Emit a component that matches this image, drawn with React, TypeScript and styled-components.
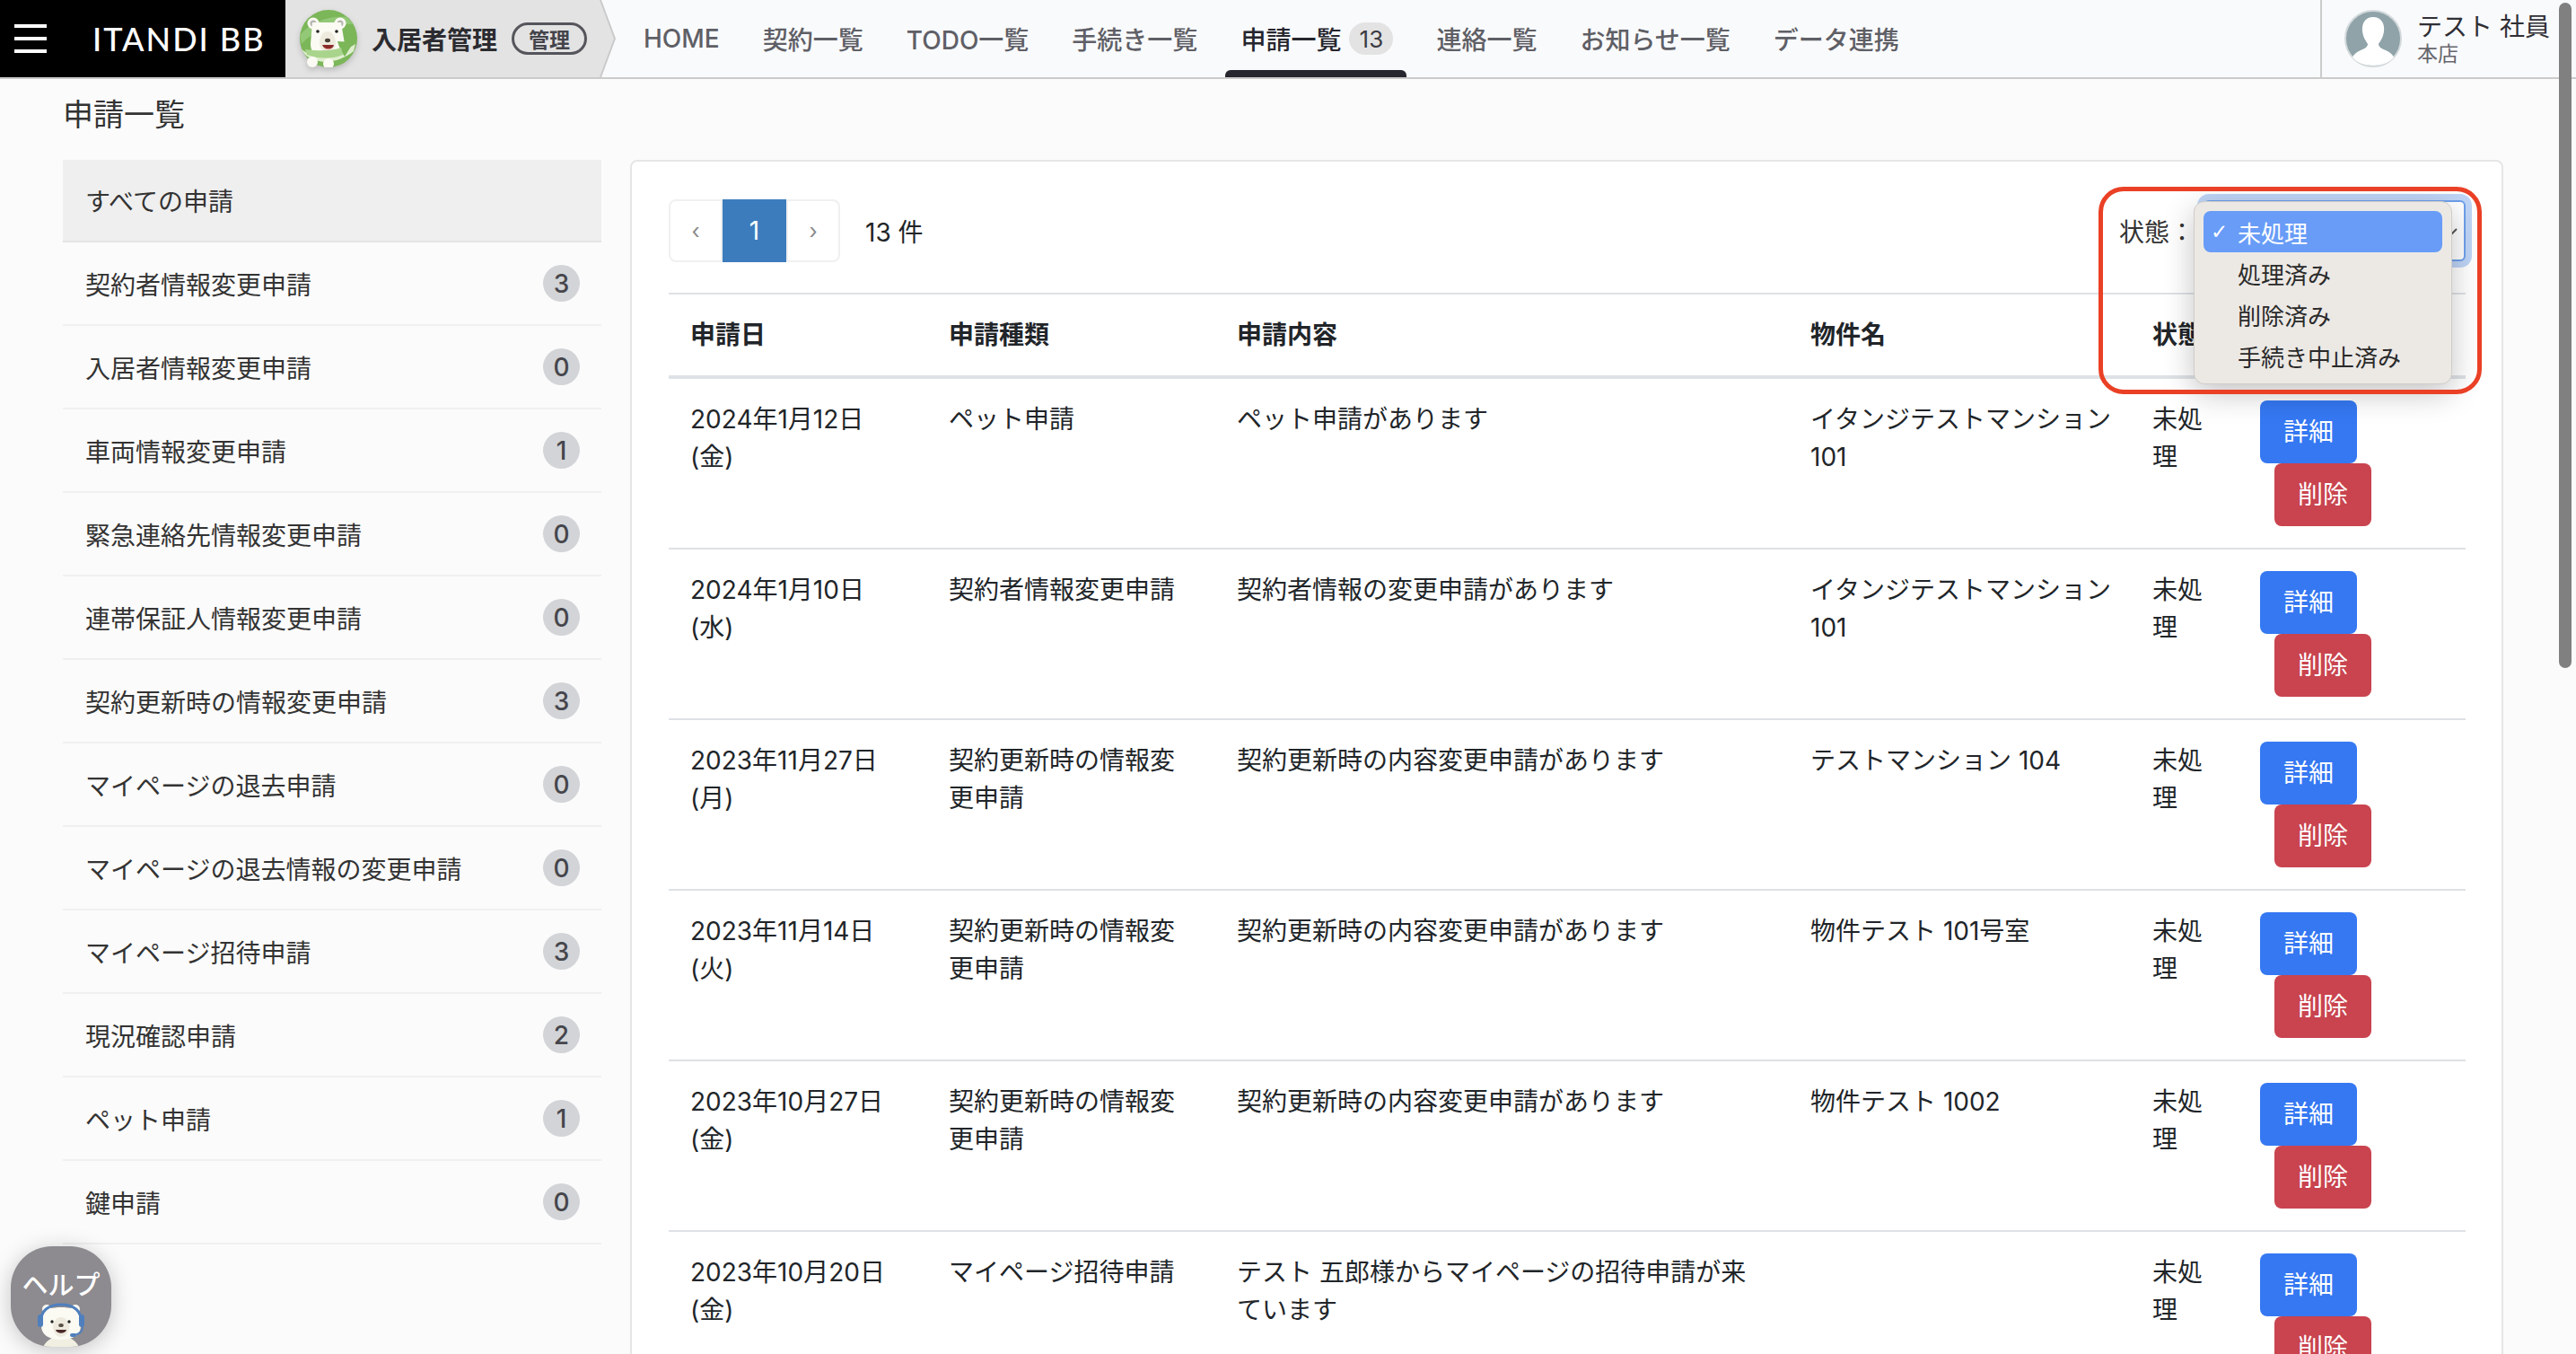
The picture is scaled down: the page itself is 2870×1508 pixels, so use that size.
import React from 'react'
import styled, { createGlobalStyle } from 'styled-components'

const GlobalStyle = createGlobalStyle`
  html, body {
    margin: 0;
    padding: 0;
    background: #fbfbfb;
    color: #212529;
    font-family: Inter, 'Noto Sans CJK JP', sans-serif;
    font-size: 28px;
  }
  * {
    box-sizing: border-box;
  }
`

const Page = styled.div`
  position: relative;
  width: 2870px;
  height: 1508px;
  overflow: hidden;
`

// header
const Header = styled.header`
  display: flex;
  height: 88px;
  background: #f9fafc;
  border-bottom: 2px solid #cbcbcb;
`

const Brand = styled.div`
  display: flex;
  align-items: center;
  width: 318px;
  padding-left: 16px;
  background: #000;
  color: #fff;
`

const Hamburger = styled.span`
  display: flex;
  flex-direction: column;
  justify-content: space-between;
  width: 36px;
  height: 32px;
  margin-right: 51px;
  i {
    display: block;
    height: 4px;
    background: #fff;
  }
`

const Logo = styled.span`
  font-family: Lato, sans-serif;
  font-size: 36px;
  font-weight: 500;
  letter-spacing: 2px;
  white-space: nowrap;
`

const Module = styled.div`
  position: relative;
  display: flex;
  align-items: center;
  width: 368px;
  padding-left: 16px;
  &::before,
  &::after {
    content: '';
    position: absolute;
    top: 0;
    bottom: 0;
    left: 0;
  }
  &::before {
    right: 0;
    background: #c9c9c9;
    clip-path: polygon(0 0, 352px 0, 368px 43px, 352px 86px, 0 86px);
  }
  &::after {
    right: 2px;
    background: #e3e3e3;
    clip-path: polygon(0 0, 350px 0, 366px 43px, 350px 86px, 0 86px);
  }
  > * {
    position: relative;
    z-index: 1;
  }
`

const BearMark = styled.svg`
  flex: none;
  width: 64px;
  height: 64px;
  margin-right: 16px;
  filter: drop-shadow(0 3px 3px rgba(0, 0, 0, 0.18));
`

const ModuleName = styled.span`
  font-weight: 700;
  color: #2b2b30;
  white-space: nowrap;
`

const RoleTag = styled.span`
  display: flex;
  align-items: center;
  justify-content: center;
  width: 84px;
  height: 36px;
  margin-left: 16px;
  border: 3px solid #55555c;
  border-radius: 18px;
  font-size: 23px;
  font-weight: 700;
  color: #44444b;
`

const Nav = styled.nav`
  display: flex;
  gap: 48px;
  margin-left: 31px;
`

const NavItem = styled.a<{ $active?: boolean }>`
  position: relative;
  display: flex;
  align-items: center;
  height: 86px;
  font-weight: 500;
  color: ${(p) => (p.$active ? '#26262e' : '#5f5f66')};
  white-space: nowrap;
  &::after {
    content: '';
    display: ${(p) => (p.$active ? 'block' : 'none')};
    position: absolute;
    left: -17px;
    right: -15px;
    bottom: 0;
    height: 8px;
    border-radius: 6px 6px 0 0;
    background: #26262e;
  }
`

const NavCount = styled.span`
  display: flex;
  align-items: center;
  justify-content: center;
  width: 49px;
  height: 36px;
  margin-left: 9px;
  border-radius: 18px;
  background: #e3e3e3;
  font-size: 26px;
  font-weight: 400;
  color: #3c3c44;
`

const User = styled.div`
  display: flex;
  align-items: center;
  width: 285px;
  margin-left: auto;
  padding-left: 25px;
  border-left: 2px solid #cbcbcb;
`

const Avatar = styled.svg`
  flex: none;
  width: 64px;
  height: 64px;
  margin-right: 17px;
`

const UserText = styled.div`
  display: flex;
  flex-direction: column;
`

const UserName = styled.span`
  font-size: 28px;
  line-height: 34px;
  color: #2f2f35;
  white-space: nowrap;
`

const UserShop = styled.span`
  font-size: 23px;
  line-height: 26px;
  color: #66666c;
`

const Scrollbar = styled.div`
  position: absolute;
  top: 3px;
  right: 5px;
  width: 14px;
  height: 741px;
  border-radius: 7px;
  background: #808080;
`

// body
const Main = styled.main`
  padding: 0 81px 0 70px;
`

const Title = styled.h1`
  display: flex;
  align-items: center;
  height: 90px;
  margin: 0;
  padding-bottom: 16px;
  font-size: 34px;
  font-weight: 400;
  color: #333;
`

const Columns = styled.div`
  display: flex;
  gap: 32px;
`

const Side = styled.aside`
  flex: none;
  width: 600px;
`

const SideRow = styled.div<{ $active?: boolean }>`
  display: flex;
  align-items: center;
  justify-content: space-between;
  height: ${(p) => (p.$active ? 92 : 93)}px;
  padding: 0 24px 0 25px;
  border-bottom: 2px solid ${(p) => (p.$active ? '#e4e4e4' : '#f0f0f0')};
  background: ${(p) => (p.$active ? '#efefef' : 'transparent')};
  color: #333;
`

const SideCount = styled.span`
  display: flex;
  align-items: center;
  justify-content: center;
  width: 41px;
  height: 41px;
  border-radius: 50%;
  background: #d2d4d7;
  font-size: 28px;
  font-weight: 500;
  color: #46464c;
`

const Panel = styled.section`
  flex: none;
  width: 2087px;
  height: 1400px;
  padding: 42px 40px 0 41px;
  border: 2px solid #e6e6e6;
  border-radius: 8px;
  background: #fff;
`

const Toolbar = styled.div`
  display: flex;
  align-items: center;
  justify-content: space-between;
  margin-bottom: 34px;
`

const Pager = styled.div`
  display: flex;
  align-items: center;
  gap: 28px;
`

const PagerBox = styled.div`
  display: flex;
  height: 70px;
`

const PageButton = styled.span<{ $active?: boolean; $side?: 'left' | 'right' }>`
  display: flex;
  align-items: center;
  justify-content: center;
  width: ${(p) => (p.$active ? 71 : 60)}px;
  border: ${(p) => (p.$active ? 'none' : '2px solid #f0f0f0')};
  border-radius: ${(p) =>
    p.$side === 'left' ? '8px 0 0 8px' : p.$side === 'right' ? '0 8px 8px 0' : '0'};
  background: ${(p) => (p.$active ? '#3c7cbd' : '#fff')};
  color: ${(p) => (p.$active ? '#fff' : '#8a8a8a')};
  font-size: ${(p) => (p.$active ? 28 : 24)}px;
`

const Filter = styled.div`
  position: relative;
  display: flex;
  align-items: center;
`

const FilterLabel = styled.span`
  width: 94px;
  color: #333;
  white-space: nowrap;
`

const SelectBox = styled.div`
  position: relative;
  display: flex;
  align-items: center;
  justify-content: flex-end;
  width: 292px;
  height: 68px;
  padding-right: 6px;
  border: 2px solid #6ea0ec;
  border-radius: 6px;
  box-shadow: 0 0 0 7px #bfd5f6;
  background: #fff;
  color: #555;
`

const Menu = styled.ul`
  position: absolute;
  z-index: 3;
  top: -1px;
  left: -13px;
  width: 288px;
  height: 204px;
  margin: 0;
  padding: 10px;
  list-style: none;
  border: 1px solid #cfcdca;
  border-radius: 12px;
  background: #ece9e5;
  box-shadow: 0 10px 34px rgba(0, 0, 0, 0.24);
`

const MenuItem = styled.li<{ $selected?: boolean }>`
  display: flex;
  align-items: center;
  height: 46px;
  padding-left: 8px;
  border-radius: 8px;
  background: ${(p) => (p.$selected ? '#689cf7' : 'transparent')};
  color: ${(p) => (p.$selected ? '#fff' : '#2a2a2a')};
  font-size: 26px;
  white-space: nowrap;
`

const MenuCheck = styled.span`
  flex: none;
  width: 30px;
  font-family: 'DejaVu Sans', sans-serif;
  font-size: 23px;
`

const Callout = styled.div`
  position: absolute;
  z-index: 4;
  top: -15px;
  right: -18px;
  bottom: -148px;
  left: -23px;
  border: 5px solid #ea4025;
  border-radius: 28px;
  pointer-events: none;
`

const Table = styled.table`
  width: 100%;
  table-layout: fixed;
  border-collapse: separate;
  border-spacing: 0;
  th,
  td {
    padding: 24px;
    text-align: left;
    vertical-align: top;
    line-height: 42px;
  }
  th {
    border-top: 2px solid #dee2e6;
    border-bottom: 4px solid #dee2e6;
    font-weight: 700;
  }
  td {
    border-bottom: 2px solid #dee2e6;
    font-weight: 400;
  }
  td:nth-child(4) {
    padding-right: 12px;
  }
`

const Actions = styled.div`
  display: flex;
  flex-wrap: wrap;
`

const ActionButton = styled.span<{ $danger?: boolean }>`
  display: flex;
  align-items: center;
  justify-content: center;
  width: 108px;
  height: 70px;
  margin-left: ${(p) => (p.$danger ? 16 : 0)}px;
  border-radius: 8px;
  background: ${(p) => (p.$danger ? '#c9444f' : '#3578f2')};
  color: #fff;
`

const HelpButton = styled.div`
  position: absolute;
  left: 12px;
  bottom: 8px;
  display: flex;
  flex-direction: column;
  align-items: center;
  width: 112px;
  height: 112px;
  padding-top: 26px;
  overflow: hidden;
  border-radius: 46px;
  background: #8d8b90;
  box-shadow: 0 4px 24px rgba(0, 0, 0, 0.22);
`

const HelpLabel = styled.span`
  font-size: 29px;
  line-height: 36px;
  font-weight: 500;
  color: #fff;
  white-space: nowrap;
`

const HelpBear = styled.svg`
  flex: none;
  width: 56px;
  height: 50px;
`

const sideItems = [
  { label: '契約者情報変更申請', count: 3 },
  { label: '入居者情報変更申請', count: 0 },
  { label: '車両情報変更申請', count: 1 },
  { label: '緊急連絡先情報変更申請', count: 0 },
  { label: '連帯保証人情報変更申請', count: 0 },
  { label: '契約更新時の情報変更申請', count: 3 },
  { label: 'マイページの退去申請', count: 0 },
  { label: 'マイページの退去情報の変更申請', count: 0 },
  { label: 'マイページ招待申請', count: 3 },
  { label: '現況確認申請', count: 2 },
  { label: 'ペット申請', count: 1 },
  { label: '鍵申請', count: 0 },
]

const navItems = ['HOME', '契約一覧', 'TODO一覧', '手続き一覧']
const navItemsAfter = ['連絡一覧', 'お知らせ一覧', 'データ連携']

const rows = [
  {
    date: '2024年1月12日 (金)',
    type: 'ペット申請',
    body: 'ペット申請があります',
    name: 'イタンジテストマンション 101',
  },
  {
    date: '2024年1月10日 (水)',
    type: '契約者情報変更申請',
    body: '契約者情報の変更申請があります',
    name: 'イタンジテストマンション 101',
  },
  {
    date: '2023年11月27日 (月)',
    type: '契約更新時の情報変更申請',
    body: '契約更新時の内容変更申請があります',
    name: 'テストマンション 104',
  },
  {
    date: '2023年11月14日 (火)',
    type: '契約更新時の情報変更申請',
    body: '契約更新時の内容変更申請があります',
    name: '物件テスト 101号室',
  },
  {
    date: '2023年10月27日 (金)',
    type: '契約更新時の情報変更申請',
    body: '契約更新時の内容変更申請があります',
    name: '物件テスト 1002',
  },
  {
    date: '2023年10月20日 (金)',
    type: 'マイページ招待申請',
    body: 'テスト 五郎様からマイページの招待申請が来ています',
    name: '',
  },
]

const menuItems = ['未処理', '処理済み', '削除済み', '手続き中止済み']
const colWidths = [288, 321, 639, 381, 120]

const App = () => {
  return (
    <Page>
      <GlobalStyle />
      <Header>
        <Brand>
          <Hamburger>
            <i />
            <i />
            <i />
          </Hamburger>
          <Logo>ITANDI BB</Logo>
        </Brand>
        <Module>
          <BearMark viewBox="0 0 64 64">
            <circle cx="32" cy="32" r="32" fill="#7bb658" />
            <path d="M0 28 C14 12 34 6 52 8 L60 16 C40 14 18 20 2 38 Z" fill="#93c877" />
            <path d="M2 44 C16 54 34 56 62 38 L60 46 C40 62 18 60 6 50 Z" fill="#dfeecf" />
            <circle cx="15" cy="15" r="6.5" fill="#fbfaf3" />
            <circle cx="15" cy="15" r="3.5" fill="#3a3a3a" opacity=".35" />
            <circle cx="45" cy="15" r="6.5" fill="#fbfaf3" />
            <circle cx="45" cy="15" r="3.5" fill="#3a3a3a" opacity=".35" />
            <path d="M14 14 H46 L50 38 C50 50 42 54 30 54 C18 54 12 48 12 38 Z" fill="#fbfaf3" />
            <ellipse cx="31" cy="36" rx="9" ry="12" fill="#eeeade" />
            <circle cx="20" cy="24" r="1.8" fill="#222" />
            <circle cx="41" cy="24" r="1.8" fill="#222" />
            <ellipse cx="31" cy="34" rx="3" ry="2.2" fill="#4a4038" />
            <path d="M25 39 H38 C37 45 27 45 25 39 Z" fill="#8a2a2a" />
            <path d="M27 42 C30 44 34 44 36 42 C34 45 29 45 27 42 Z" fill="#ee8a80" />
            <path d="M42 35 L60 36 L50 52 C46 46 44 42 42 35 Z" fill="#7bb658" />
            <path d="M6 44 C22 46 36 46 46 42 L48 50 C34 56 20 54 8 50 Z" fill="#a9d48c" />
            <circle cx="14" cy="58" r="6" fill="#fbfaf3" />
            <circle cx="32" cy="60" r="6" fill="#fbfaf3" />
          </BearMark>
          <ModuleName>入居者管理</ModuleName>
          <RoleTag>管理</RoleTag>
        </Module>
        <Nav>
          {navItems.map((label) => (
            <NavItem key={label}>{label}</NavItem>
          ))}
          <NavItem $active>
            申請一覧
            <NavCount>13</NavCount>
          </NavItem>
          {navItemsAfter.map((label) => (
            <NavItem key={label}>{label}</NavItem>
          ))}
        </Nav>
        <User>
          <Avatar viewBox="0 0 64 64">
            <circle cx="32" cy="32" r="31" fill="#8fa3a9" stroke="#d3d9db" strokeWidth="2" />
            <path d="M32 8 C41 8 45 15 44 24 C43 31 40 35 38 38 C38 41 41 43 46 45 C51 47 54 50 55 53 C50 59 41 62 32 62 C23 62 14 59 9 53 C10 50 13 47 18 45 C23 43 26 41 26 38 C24 35 21 31 20 24 C19 15 23 8 32 8 Z" fill="#fff" />
          </Avatar>
          <UserText>
            <UserName>テスト 社員</UserName>
            <UserShop>本店</UserShop>
          </UserText>
        </User>
      </Header>
      <Main>
        <Title>申請一覧</Title>
        <Columns>
          <Side>
            <SideRow $active>すべての申請</SideRow>
            {sideItems.map((item) => (
              <SideRow key={item.label}>
                {item.label}
                <SideCount>{item.count}</SideCount>
              </SideRow>
            ))}
          </Side>
          <Panel>
            <Toolbar>
              <Pager>
                <PagerBox>
                  <PageButton $side="left">‹</PageButton>
                  <PageButton $active>1</PageButton>
                  <PageButton $side="right">›</PageButton>
                </PagerBox>
                <span>13 件</span>
              </Pager>
              <Filter>
                <FilterLabel>状態：</FilterLabel>
                <SelectBox>
                  <svg width="14" height="14" viewBox="0 0 14 14">
                    <path d="M2 5 L7 10 L12 5" fill="none" stroke="#555" strokeWidth="2" />
                  </svg>
                  <Menu>
                    {menuItems.map((label, i) => (
                      <MenuItem key={label} $selected={i === 0}>
                        <MenuCheck>{i === 0 ? '✓' : ''}</MenuCheck>
                        {label}
                      </MenuItem>
                    ))}
                  </Menu>
                </SelectBox>
                <Callout />
              </Filter>
            </Toolbar>
            <Table>
              <colgroup>
                {colWidths.map((w) => (
                  <col key={w} width={w} />
                ))}
                <col />
              </colgroup>
              <thead>
                <tr>
                  <th>申請日</th>
                  <th>申請種類</th>
                  <th>申請内容</th>
                  <th>物件名</th>
                  <th>状態</th>
                  <th />
                </tr>
              </thead>
              <tbody>
                {rows.map((row) => (
                  <tr key={row.date}>
                    <td>{row.date}</td>
                    <td>{row.type}</td>
                    <td>{row.body}</td>
                    <td>{row.name}</td>
                    <td>未処理</td>
                    <td>
                      <Actions>
                        <ActionButton>詳細</ActionButton>
                        <ActionButton $danger>削除</ActionButton>
                      </Actions>
                    </td>
                  </tr>
                ))}
              </tbody>
            </Table>
          </Panel>
        </Columns>
      </Main>
      <Scrollbar />
      <HelpButton>
        <HelpLabel>ヘルプ</HelpLabel>
        <HelpBear viewBox="0 0 56 50">
          <path d="M8 50 C12 42 20 38 28 38 C36 38 44 42 48 50 Z" fill="#f1efe2" />
          <circle cx="12" cy="8" r="5" fill="#fbfaf3" />
          <circle cx="44" cy="8" r="5" fill="#fbfaf3" />
          <path d="M8 12 C12 4 44 4 48 12 L50 26 C50 38 40 42 28 42 C16 42 6 38 6 26 Z" fill="#fbfaf3" />
          <path d="M6 24 C4 10 14 3 28 3 C42 3 52 10 50 24" fill="none" stroke="#4f7fbd" strokeWidth="3" />
          <rect x="2" y="14" width="6" height="14" rx="3" fill="#4f7fbd" />
          <rect x="48" y="14" width="6" height="14" rx="3" fill="#4f7fbd" />
          <path d="M52 28 C52 34 48 36 42 37" fill="none" stroke="#4f7fbd" strokeWidth="2" />
          <rect x="38" y="35" width="7" height="4" rx="2" fill="#4f7fbd" />
          <ellipse cx="28" cy="28" rx="9" ry="11" fill="#eeeade" />
          <circle cx="18" cy="22" r="1.7" fill="#222" />
          <circle cx="37" cy="22" r="1.7" fill="#222" />
          <ellipse cx="28" cy="26" rx="2.8" ry="2" fill="#5a5045" />
          <path d="M22 31 H34 C33 36 23 36 22 31 Z" fill="#4a2a2a" />
        </HelpBear>
      </HelpButton>
    </Page>
  )
}

export default App
